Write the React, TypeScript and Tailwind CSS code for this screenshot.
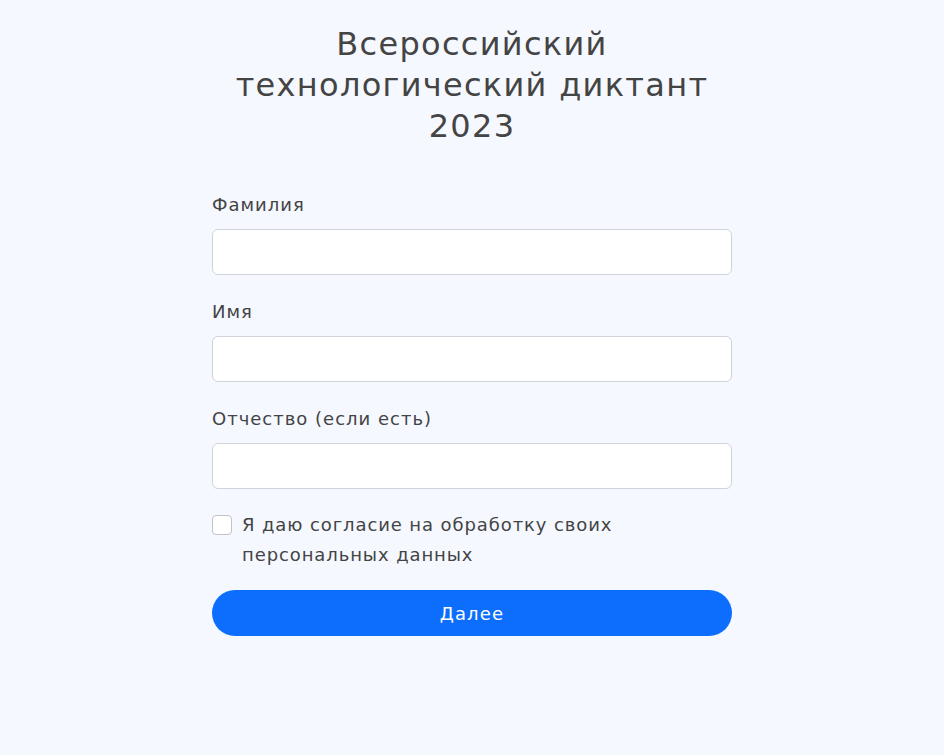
import { useState } from 'react'

const fields = ['Фамилия', 'Имя', 'Отчество (если есть)']

export default function App() {
  const [agree, setAgree] = useState(false)

  return (
    <div className="min-h-[755px] w-full bg-[#f5f8ff] font-['DejaVu_Sans',sans-serif] text-[#444]">
      <div className="mx-auto flex w-[520px] flex-col pt-[24px]">
        <h1 className="text-center text-[32px] leading-[41px] font-normal tracking-[1.3px] text-[#444]">
          Всероссийский
          <br />
          технологический диктант
          <br />
          2023
        </h1>

        <form className="mt-[44px] flex flex-col" onSubmit={(e) => e.preventDefault()}>
          {fields.map((f, i) => (
            <div key={f} className={i === 2 ? 'mb-[21px] flex flex-col' : 'mb-[23px] flex flex-col'}>
              <label className="mb-[11px] text-[18px] leading-[27px] tracking-[1px]">{f}</label>
              <input
                type="text"
                className="h-[46px] w-full rounded-[6px] border border-[#ced4da] bg-white px-3 text-[18px] outline-none"
              />
            </div>
          ))}

          <label className="flex cursor-pointer items-start gap-[10px] text-[18px] leading-[30px] tracking-[0.9px]">
            <span className="mt-[5px] flex h-[20px] w-[20px] shrink-0 items-center justify-center rounded-[4px] border border-[#bfc4ca] bg-white">
              <input
                type="checkbox"
                checked={agree}
                onChange={(e) => setAgree(e.target.checked)}
                className="sr-only"
              />
            </span>
            <span>
              Я даю согласие на обработку своих
              <br />
              персональных данных
            </span>
          </label>

          <button
            type="submit"
            className="mt-[20px] h-[46px] w-full rounded-full bg-[#0d6efd] text-[18px] tracking-[1.2px] text-white"
          >
            Далее
          </button>
        </form>
      </div>
    </div>
  )
}
